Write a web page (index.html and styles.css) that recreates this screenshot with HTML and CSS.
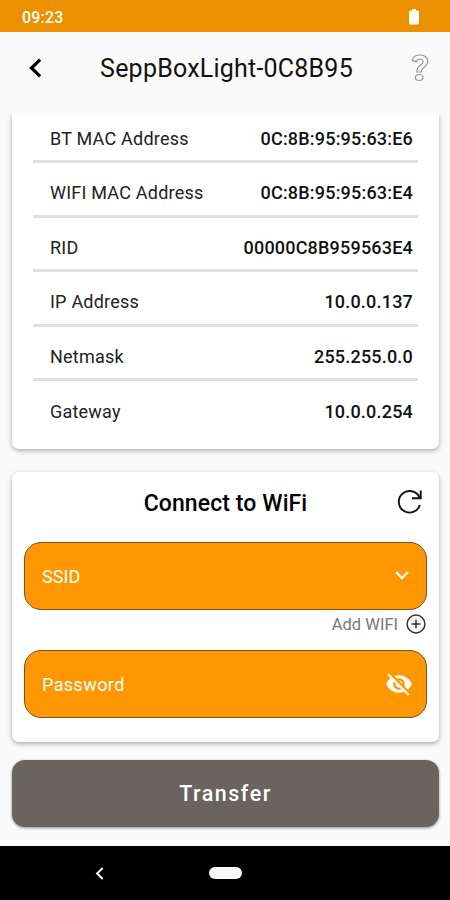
FILE: index.html
```html
<!DOCTYPE html>
<html lang="en">
<head>
<meta charset="utf-8">
<title>SeppBoxLight-0C8B95</title>
<link rel="stylesheet" href="styles.css">
</head>
<body>
<div class="screen">
  <div class="status">
    <span class="clock">09:23</span>
    <svg class="battery" width="10" height="16" viewBox="0 0 10 16"><path fill="#fff" d="M3 0h4v1.500h1.500q1.500 0 1.500 1.500v11q0 1.500-1.500 1.500h-7Q0 15.500 0 14V3Q0 1.500 1.500 1.500H3z"/></svg>
  </div>
  <header class="header">
    <svg class="back" width="14" height="20" viewBox="0 0 14 20"><path d="M12.100 1.600 3.500 10l8.600 8.400" fill="none" stroke="#000" stroke-width="3.200"/></svg>
    <h1 class="title">SeppBoxLight-0C8B95</h1>
    <svg class="help" width="18" height="28" viewBox="0 0 18 28"><g fill="none" stroke="#999" stroke-width="1.200" stroke-linejoin="round"><path d="M1.200 6.400C2 3 5 1 9 1c4.500 0 7.800 2.500 7.800 6.600 0 3.400-2.300 5-4.300 6.400-1.700 1.200-2.200 1.900-2.200 3.500v.5H6v-1.200c0-3 1.500-4.300 3.300-5.600 1.600-1.100 2.800-1.900 2.800-3.500S10.800 5.200 9 5.200c-2 0-3.200 1-3.800 2.700z"/><ellipse cx="8.200" cy="23.500" rx="3.800" ry="3"/></g></svg>
  </header>
  <main class="content">
    <section class="card info">
      <div class="row"><span class="label">BT MAC Address</span><span class="value">0C:8B:95:95:63:E6</span></div>
      <div class="row"><span class="label">WIFI MAC Address</span><span class="value">0C:8B:95:95:63:E4</span></div>
      <div class="row"><span class="label">RID</span><span class="value">00000C8B959563E4</span></div>
      <div class="row"><span class="label">IP Address</span><span class="value">10.0.0.137</span></div>
      <div class="row"><span class="label">Netmask</span><span class="value">255.255.0.0</span></div>
      <div class="row"><span class="label">Gateway</span><span class="value">10.0.0.254</span></div>
    </section>
    <section class="card wifi">
      <div class="wifi-head">
        <h2 class="wifi-title">Connect to WiFi</h2>
        <svg class="refresh" width="26" height="26" viewBox="0 0 26 26"><path d="M22.900 16A10.800 10.800 0 1 1 22.500 8.500M23.700 1.500v7.700H15" fill="none" stroke="#111" stroke-width="1.900"/></svg>
      </div>
      <div class="field"><span>SSID</span>
        <svg class="chevron" width="14" height="10" viewBox="0 0 14 10"><path d="M1 1 7 7l6-6" fill="none" stroke="#fff" stroke-width="2.300"/></svg>
      </div>
      <div class="add"><span>Add WIFI</span>
        <svg width="20" height="20" viewBox="0 0 20 20"><g fill="none" stroke="#333" stroke-width="1.500"><circle cx="10" cy="10" r="8.900"/><path d="M10 5.400v9.200M5.400 10h9.200"/></g></svg>
      </div>
      <div class="field"><span class="password">Password</span>
        <svg class="eye" width="28" height="28" viewBox="0 0 24 24"><path fill="#fff" d="M12 7c2.760 0 5 2.240 5 5 0 .65-.13 1.260-.36 1.830l2.920 2.920c1.510-1.260 2.700-2.890 3.430-4.750-1.730-4.390-6-7.500-11-7.500-1.400 0-2.740.25-3.980.7l2.160 2.160C10.740 7.130 11.350 7 12 7zM2 4.270l2.280 2.280.46.460C3.080 8.300 1.780 10.020 1 12c1.730 4.390 6 7.500 11 7.500 1.550 0 3.030-.3 4.380-.84l.42.42L19.730 22 21 20.730 3.270 3 2 4.270zM7.530 9.800l1.550 1.550c-.05.21-.08.43-.08.650 0 1.660 1.340 3 3 3 .22 0 .44-.03.65-.08l1.550 1.550c-.67.33-1.410.53-2.200.53-2.760 0-5-2.240-5-5 0-.79.2-1.530.53-2.200zm4.310-.78l3.150 3.150.02-.16c0-1.660-1.340-3-3-3l-.17.01z"/></svg>
      </div>
    </section>
    <button class="transfer" type="button">Transfer</button>
  </main>
  <nav class="nav">
    <svg class="nav-back" width="9" height="13" viewBox="0 0 9 13"><path d="M7.700 1 2 6.500 7.700 12" fill="none" stroke="#fff" stroke-width="1.900"/></svg>
    <span class="pill"></span>
  </nav>
</div>
</body>
</html>
```
FILE: styles.css
```css
* { box-sizing: border-box; }
body { margin: 0; font-family: Roboto, sans-serif; background: #fafafa; color: #111; }
svg { display: block; flex: none; }
.screen { width: 450px; height: 900px; display: flex; flex-direction: column; overflow: hidden; }
.status { height: 32px; flex: none; background: #ed9000; display: flex; align-items: center; justify-content: space-between; padding: 2px 31px 0 22px; }
.clock { color: #fff; font-size: 16px; font-weight: 500; letter-spacing: 0.2px; }
.header { height: 81px; flex: none; display: flex; align-items: center; justify-content: space-between; padding: 0 21px 9px 28px; }
.title { margin: 0; font-size: 25px; font-weight: 400; letter-spacing: 0.22px; color: #111; }
.content { flex: 1; min-height: 0; display: flex; flex-direction: column; padding: 0 11px 0 12px; overflow: hidden; }
.card { flex: none; background: #fff; border-radius: 7px; box-shadow: 0 2px 4px rgba(0,0,0,.25), 0 1px 7px rgba(0,0,0,.08); }
.info { height: 336px; border-radius: 0 0 7px 7px; padding: 0 21px; }
.row { height: 54.6px; display: flex; align-items: center; justify-content: space-between; padding: 8px 5px 0 17px; border-bottom: 3px solid #e0e0e0; font-size: 18px; }
.row:first-child { height: 50px; padding-top: 4px; }
.row:last-child { border-bottom: 0; padding-top: 5px; }
.label { letter-spacing: 0.22px; color: #222; }
.value { font-weight: 500; letter-spacing: 0.2px; }
.wifi { height: 270px; margin-top: 23px; padding: 0 12px; }
.wifi-head { height: 70px; display: grid; grid-template-columns: 26px 1fr 26px; align-items: center; padding: 0 4px 10px 0; }
.wifi-title { grid-column: 2; margin: 2px 0 0 4px; text-align: center; font-size: 23px; font-weight: 500; letter-spacing: 0.1px; color: #000; }
.field { height: 68px; border: 1px solid #725031; border-radius: 17px; background: #ff9800; color: #fff; display: flex; align-items: center; justify-content: space-between; padding: 0 17px; font-size: 18px; letter-spacing: 0.1px; }
.password { letter-spacing: 0.4px; }
.eye { margin-right: -4px; }
.add { height: 40px; display: flex; justify-content: flex-end; gap: 8px; padding: 4px 1px 0 0; line-height: 21px; font-size: 16.500px; color: #777; }
.transfer { height: 67px; flex: none; margin-top: 18px; border: 0; border-radius: 13px; background: #69645f; color: #fff; font-family: inherit; font-size: 21.500px; font-weight: 500; letter-spacing: 1.500px; box-shadow: 0 1px 3px rgba(0,0,0,.45); }
.nav { height: 54px; flex: none; background: #000; display: grid; grid-template-columns: 1fr 33px 1fr; align-items: center; }
.nav-back { margin-left: 95px; }
.pill { height: 12px; background: #f8f8f8; border-radius: 6px; }
```
